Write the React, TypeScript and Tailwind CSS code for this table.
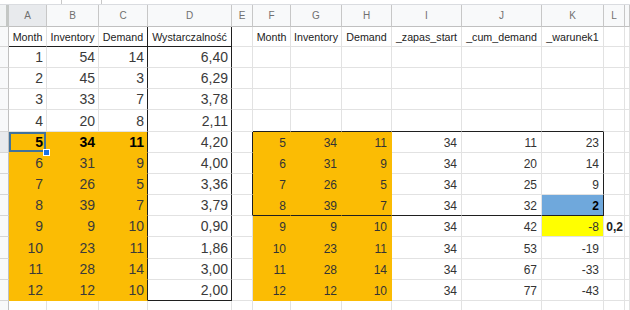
import type { ReactNode } from 'react'

const LETTERS = ['', 'A', 'B', 'C', 'D', 'E', 'F', 'G', 'H', 'I', 'J', 'K', 'L', '']

const HEAD: Record<number, string> = {
  1: 'Month',
  2: 'Inventory',
  3: 'Demand',
  4: 'Wystarczalność',
  6: 'Month',
  7: 'Inventory',
  8: 'Demand',
  9: '_zapas_start',
  10: '_cum_demand',
  11: '_warunek1',
}

const LEFT: (string | number)[][] = [
  [1, 54, 14, '6,40'],
  [2, 45, 3, '6,29'],
  [3, 33, 7, '3,78'],
  [4, 20, 8, '2,11'],
  [5, 34, 11, '4,20'],
  [6, 31, 9, '4,00'],
  [7, 26, 5, '3,36'],
  [8, 39, 7, '3,79'],
  [9, 9, 10, '0,90'],
  [10, 23, 11, '1,86'],
  [11, 28, 14, '3,00'],
  [12, 12, 10, '2,00'],
]

const RIGHT: Record<number, number[]> = {
  5: [5, 34, 11, 34, 11, 23],
  6: [6, 31, 9, 34, 20, 14],
  7: [7, 26, 5, 34, 25, 9],
  8: [8, 39, 7, 34, 32, 2],
  9: [9, 9, 10, 34, 42, -8],
  10: [10, 23, 11, 34, 53, -19],
  11: [11, 28, 14, 34, 67, -33],
  12: [12, 12, 10, 34, 77, -43],
}

// r: 0 = column letters, 1 = header row, 2..13 = months 1..12, 14 = cut off row
function Cell({ r, c }: { r: number; c: number }) {
  if (r === 0) {
    if (c === 0)
      return <div className="bg-[#f1f3f4] border-r-[3px] border-b border-r-[#c4c7c5] border-b-[#c4c7c5]" />
    return (
      <div
        className={`flex items-center justify-center border-r border-b border-r-[#c7c7c7] border-b-[#c0c0c0] text-[10px] text-[#707070] ${
          c === 1 ? 'bg-[#e8eaed]' : 'bg-[#f8f9fa]'
        }`}
      >
        {LETTERS[c]}
      </div>
    )
  }

  const m = r - 1
  if (c === 0)
    return (
      <div
        className={`border-r border-b border-r-[#c0c0c0] border-b-[#d6d6d6] ${
          m === 5 ? 'bg-[#e8eaed]' : 'bg-[#f8f9fa]'
        }`}
      />
    )

  const orange = m >= 5 && m <= 12 && ((c >= 1 && c <= 3) || (c >= 6 && c <= 8))
  const blue = m === 8 && c === 11
  const yellow = m === 9 && c === 11
  const blackR = (r >= 1 && r <= 13 && (c === 3 || c === 4)) || (m >= 5 && m <= 8 && (c === 5 || c === 11))
  const blackB =
    (r === 1 && c >= 1 && c <= 4) || (m === 12 && c === 4) || ((m === 4 || m === 8) && c >= 6 && c <= 11)

  const bg = orange ? 'bg-[#fbbc04]' : blue ? 'bg-[#6fa8dc]' : yellow ? 'bg-[#ffff00]' : 'bg-white'
  const rColor = blackR ? 'border-r-[#1f1f1f]' : orange ? 'border-r-[#fbbc04]' : 'border-r-[#e2e2e2]'
  const bColor = blackB ? 'border-b-[#1f1f1f]' : orange ? 'border-b-[#fbbc04]' : 'border-b-[#e2e2e2]'

  let content: ReactNode = null
  let cls = ''
  if (r === 1) {
    content = HEAD[c]
    cls = 'justify-center text-[10.7px] leading-[13px] text-[#222] pb-[2px]'
  } else if (m >= 1 && m <= 12) {
    if (c >= 1 && c <= 4) {
      content = LEFT[m - 1][c - 1]
      cls = `justify-end pr-[3px] pb-[2px] text-[14px] leading-[15px] ${
        m === 5 && c <= 3 ? 'font-bold text-black' : 'text-[#3a3a3a]'
      }`
    } else if (c >= 6 && c <= 11 && RIGHT[m]) {
      content = RIGHT[m][c - 6]
      cls = `justify-end pr-[4px] pb-[2px] text-[12px] leading-[14px] ${
        blue ? 'font-bold text-black' : 'text-[#333]'
      }`
    } else if (c === 12 && m === 9) {
      content = '0,2'
      cls = 'justify-end pr-[1px] pb-[2px] text-[12px] leading-[14px] font-bold text-[#222]'
    }
  }

  return (
    <div className={`relative flex items-end whitespace-nowrap border-r border-b ${bg} ${rColor} ${bColor} ${cls}`}>
      {content}
      {m === 5 && c === 1 && (
        <>
          <div className="absolute inset-0 border-2 border-[#41729c]" />
          <div className="absolute right-[-4px] bottom-[-4px] z-10 w-[7px] h-[7px] bg-[#1a73e8] border border-white" />
        </>
      )}
    </div>
  )
}

export default function App() {
  const rows = Array.from({ length: 15 }, (_, i) => i)
  const cols = Array.from({ length: 14 }, (_, i) => i)

  return (
    <div className="w-[630px] h-[310px] overflow-hidden bg-white font-['Liberation_Sans',Arial,sans-serif]">
      {/* toolbar remnant */}
      <div className="h-[5px] flex border-b border-[#dadce0]">
        <div className="ml-[61px] w-px h-[4px] bg-[#c8c8c8]" />
        <div className="ml-[39px] w-px h-[4px] bg-[#c8c8c8]" />
      </div>

      <div className="grid grid-cols-[9px_38px_52px_49px_84px_21px_38px_51px_50px_70px_80px_62px_21px_1fr] grid-rows-[22px_20px_21px_21px_21px_22px_21px_21px_21px_21px_21px_22px_21px_21px_20px]">
        {rows.map((r) => cols.map((c) => <Cell key={`${r}-${c}`} r={r} c={c} />))}
      </div>
    </div>
  )
}
